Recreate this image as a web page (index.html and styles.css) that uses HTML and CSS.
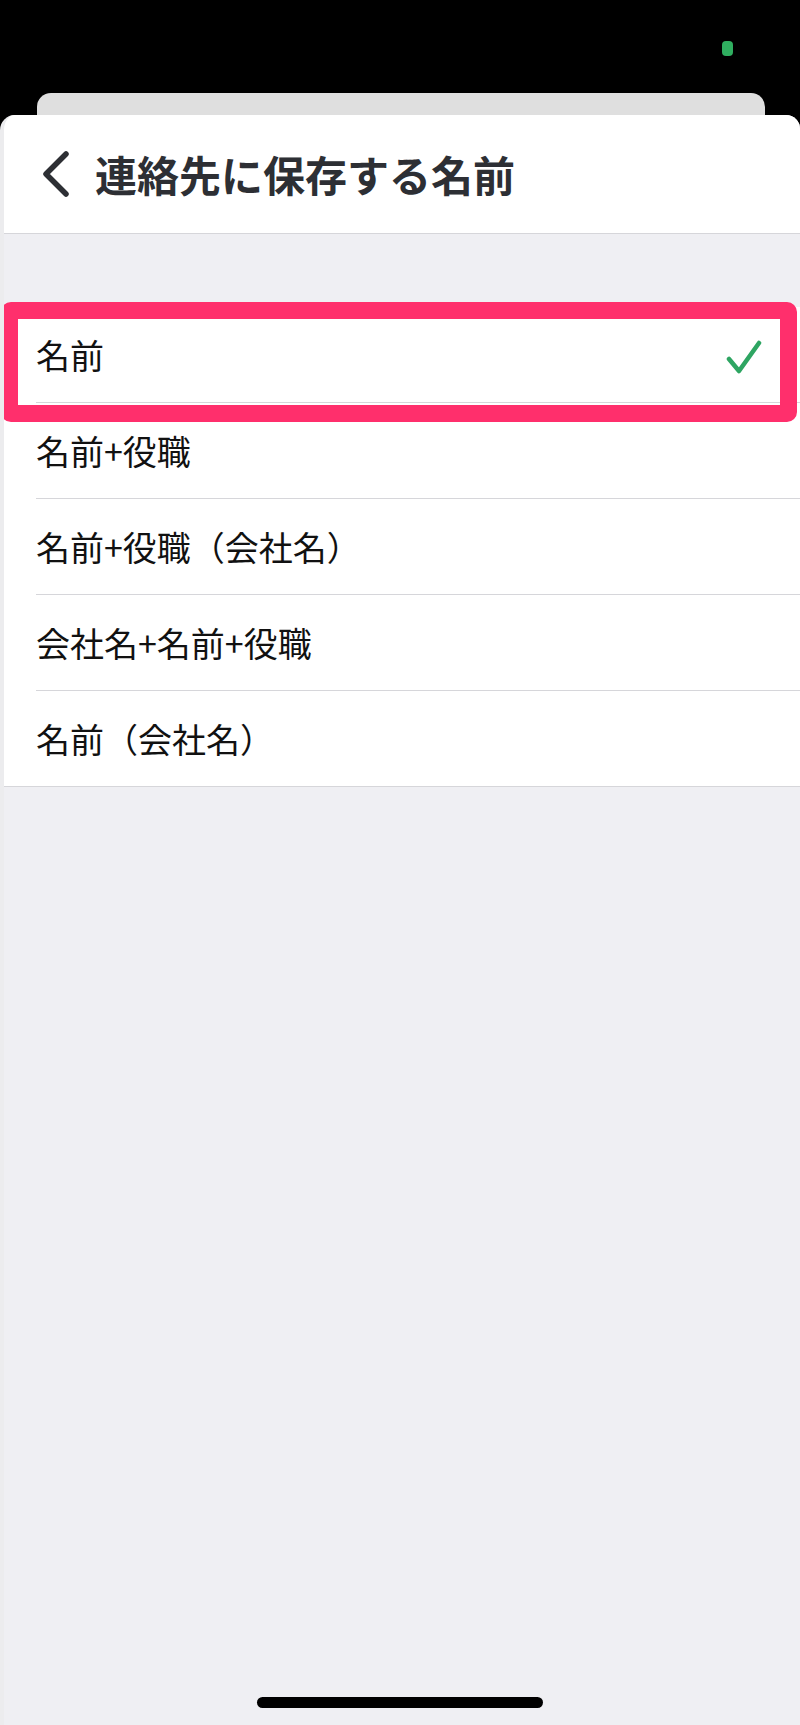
FILE: index.html
```html
<!DOCTYPE html>
<html lang="ja">

<head>
    <meta charset="UTF-8">
    <meta name="viewport" content="width=device-width, initial-scale=1.0">
    <title>連絡先に保存する名前</title>
    <link rel="stylesheet" href="styles.css">
</head>

<body>
    <div class="phone">
        <div class="status">
            <span class="cam-dot"></span>
            <div class="back-card"></div>
        </div>

        <div class="sheet">
            <header class="nav">
                <svg class="back" width="30" height="50" viewBox="0 0 30 50">
                    <polyline points="25,5 5,25 25,45" />
                </svg>
                <h1>連絡先に保存する名前</h1>
            </header>

            <ul class="options">
                <li class="option selected">
                    <span>名前</span>
                    <svg class="check" width="36" height="40" viewBox="0 0 36 40">
                        <polyline points="3,24 13,36 33,8" />
                    </svg>
                    <div class="highlight"></div>
                </li>
                <li class="option"><span>名前+役職</span></li>
                <li class="option"><span>名前+役職（会社名）</span></li>
                <li class="option"><span>会社名+名前+役職</span></li>
                <li class="option"><span>名前（会社名）</span></li>
            </ul>

            <div class="home-bar"></div>
        </div>
    </div>
</body>

</html>
```

FILE: styles.css
```css
body {
    margin: 0;
    background: #000;
    font-family: "Noto Sans CJK JP", sans-serif;
}

.phone {
    display: flex;
    flex-direction: column;
    min-height: 1725px;
    background: #000;
}

/* top bar behind the sheet */
.status {
    display: flex;
    flex-direction: column;
    padding-top: 41px;
}

.cam-dot {
    align-self: flex-end;
    width: 11px;
    height: 15px;
    margin-right: 67px;
    border-radius: 4px;
    background: #2fae5f;
}

.back-card {
    height: 22px;
    margin: 37px 35px 0 37px;
    border-radius: 14px 14px 0 0;
    background: #dfdfdf;
}

.sheet {
    flex: 1;
    display: flex;
    flex-direction: column;
    border-left: 4px solid #ececee;
    border-radius: 15px 14px 0 0;
    background: #efeff3;
    overflow: hidden;
}

.nav {
    display: flex;
    align-items: center;
    height: 118px;
    padding-left: 37px;
    background: #fff;
    border-bottom: 1px solid #d6d6da;
}

.back {
    flex-shrink: 0;
}

.back polyline {
    fill: none;
    stroke: #2d2f34;
    stroke-width: 5.5;
    stroke-linecap: round;
    stroke-linejoin: round;
}

.nav h1 {
    margin: 0 0 0 24px;
    font-size: 42px;
    font-weight: 700;
    color: #2d2f34;
    line-height: 1;
}

.options {
    list-style: none;
    margin: 73px 0 0 0;
    padding: 0;
    background: #fff;
    border-bottom: 1px solid #d6d6da;
}

.option {
    position: relative;
    display: flex;
    align-items: center;
    justify-content: space-between;
    height: 95px;
    margin-left: 32px;
    padding-right: 38px;
    font-size: 34px;
    color: #111;
    border-bottom: 1px solid #d6d6da;
}

.option:last-child {
    border-bottom: none;
}

.check polyline {
    fill: none;
    stroke: #2ea562;
    stroke-width: 4.5;
    stroke-linecap: round;
    stroke-linejoin: round;
}

/* pink annotation frame */
.highlight {
    position: absolute;
    top: -5px;
    left: -35px;
    right: 3px;
    bottom: -20px;
    border: 17px solid #ff2f6c;
    border-radius: 10px;
}

.home-bar {
    align-self: center;
    width: 286px;
    height: 11px;
    margin: auto 0 17px -4px;
    border-radius: 6px;
    background: #000;
}
```
